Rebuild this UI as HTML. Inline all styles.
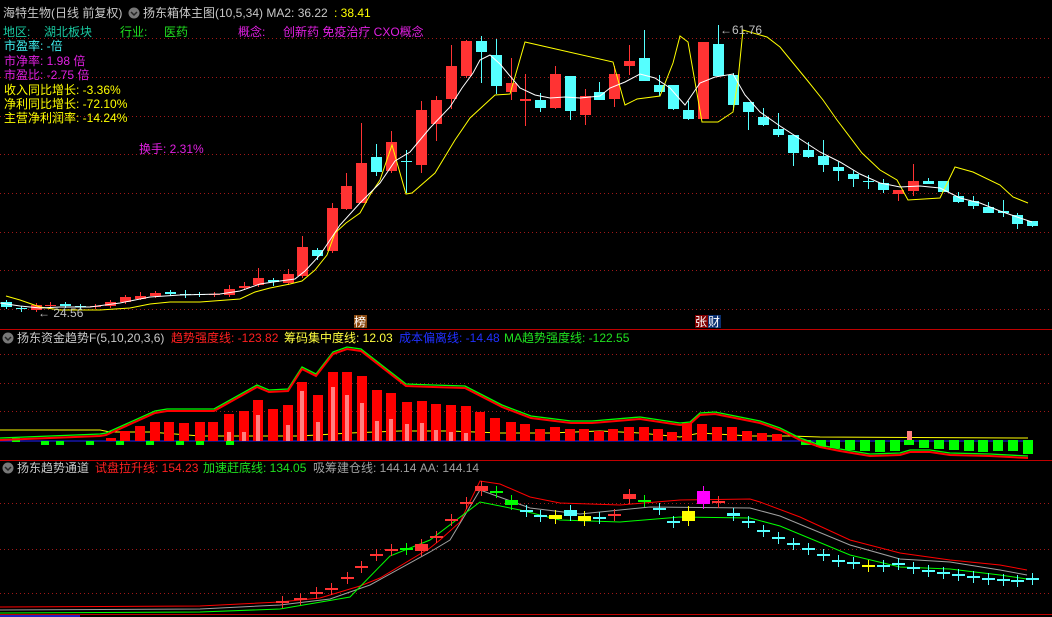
<!DOCTYPE html>
<html><head><meta charset="utf-8"><style>
html,body{margin:0;padding:0;background:#000;width:1052px;height:617px;overflow:hidden}
svg{display:block}
text{font-family:"Liberation Sans","Noto Sans CJK SC","WenQuanYi Zen Hei",sans-serif;font-size:12px}
</style></head><body>
<svg id="s" width="1052" height="617" viewBox="0 0 1052 617" xmlns="http://www.w3.org/2000/svg">
<rect width="1052" height="617" fill="#000"/>
<g id="grid" stroke="#a01818" stroke-width="1" stroke-dasharray="1,3"></g>
<g id="g"></g>
<line x1="0" y1="329.5" x2="1052" y2="329.5" stroke="#c00000"/>
<line x1="0" y1="460.5" x2="1052" y2="460.5" stroke="#c00000"/>
<line x1="0" y1="614.5" x2="1052" y2="614.5" stroke="#c00000"/>
<line x1="0" y1="616" x2="80" y2="616" stroke="#2020c0" stroke-width="2"/>
<!-- header -->
<text x="3" y="17" fill="#c8c8c8">海特生物(日线 前复权)</text>
<circle cx="134" cy="13" r="5.5" fill="#777"/><path d="M131 12 L134 15 L137 12" stroke="#222" stroke-width="1.5" fill="none"/>
<text x="143" y="17" fill="#c8c8c8">扬东箱体主图(10,5,34)  MA2: 36.22</text>
<text x="334" y="17" fill="#ffff00">: 38.41</text>
<text x="3" y="36" fill="#19c8a0">地区:</text>
<text x="44" y="36" fill="#19c8a0">湖北板块</text>
<text x="120" y="36" fill="#20e020">行业:</text>
<text x="164" y="36" fill="#20e020">医药</text>
<text x="238" y="36" fill="#e020e0">概念:</text>
<text x="283" y="36" fill="#e020e0">创新药 免疫治疗 CXO概念</text>
<text x="4" y="50" fill="#40f0f0">市盈率: -倍</text>
<text x="4" y="65" fill="#e020e0">市净率: 1.98 倍</text>
<text x="4" y="79" fill="#e020e0">市盈比: -2.75 倍</text>
<text x="4" y="94" fill="#ffff00">收入同比增长: -3.36%</text>
<text x="4" y="108" fill="#ffff00">净利同比增长: -72.10%</text>
<text x="4" y="122" fill="#ffff00">主营净利润率: -14.24%</text>
<text x="139" y="153" fill="#e020e0">换手: 2.31%</text>
<text x="720" y="34" fill="#c0c0c0">←61.76</text>
<text x="38" y="317" fill="#c0c0c0">← 24.56</text>
<rect x="354" y="315" width="13" height="13" fill="#8a4a10"/><text x="354" y="326" fill="#fff" font-size="11">榜</text>
<rect x="695" y="315" width="13" height="13" fill="#800000"/><text x="695" y="326" fill="#fff" font-size="11">张</text>
<rect x="708" y="315" width="13" height="13" fill="#0a3070"/><text x="708" y="326" fill="#fff" font-size="11">财</text>
<!-- panel 2 header -->
<circle cx="8" cy="338" r="5.5" fill="#777"/><path d="M5 337 L8 340 L11 337" stroke="#222" stroke-width="1.5" fill="none"/>
<text x="17" y="342" fill="#c8c8c8">扬东资金趋势F(5,10,20,3,6)</text>
<text x="171" y="342" fill="#ff2020">趋势强度线: -123.82</text>
<text x="284" y="342" fill="#ffff40">筹码集中度线: 12.03</text>
<text x="399" y="342" fill="#2030ff">成本偏离线: -14.48</text>
<text x="504" y="342" fill="#20e020">MA趋势强度线: -122.55</text>
<!-- panel 3 header -->
<circle cx="8" cy="468" r="5.5" fill="#777"/><path d="M5 467 L8 470 L11 467" stroke="#222" stroke-width="1.5" fill="none"/>
<text x="17" y="472" fill="#c8c8c8">扬东趋势通道</text>
<text x="95" y="472" fill="#ff2020">试盘拉升线: 154.23</text>
<text x="203" y="472" fill="#20e020">加速赶底线: 134.05</text>
<text x="313" y="472" fill="#a0a0a0">吸筹建仓线: 144.14  AA: 144.14</text>
</svg>
<script>
var NS="http://www.w3.org/2000/svg",g=document.getElementById('g'),gr=document.getElementById('grid');
function el(t,a,p){var e=document.createElementNS(NS,t);for(var k in a)e.setAttribute(k,a[k]);(p||g).appendChild(e);return e;}
[38,77,116,154,193,232,270,309,354,383,411,503,549,593].forEach(function(y){el('line',{x1:0,y1:y+.5,x2:1052,y2:y+.5},gr);});
function pl(pts,c,w){el('polyline',{points:pts.map(function(p){return p.join(',')}).join(' '),fill:'none',stroke:c,'stroke-width':w||1});}
var R='#ff3333',C='#55ffff';
// main candles [x,top,bot,color,wt,wb]
var cs=[[6,302,307,C,300,309],[21,308,309,C,306,312],[36,305,310,R],[50,305,306,R,302,308],[65,304,306,C],[80,306,307,C,304,310],[95,306,307,R,304,309],[110,302,306,R],[125,297,302,R],[140,296,299,R,292,300],[155,293,296,R],[170,292,294,C,290,296],[185,294,295,C,290,298],[199,294,295,C],[214,294,295,R,292,297],[229,289,295,R,285,297],[244,286,288,R,282,290],[258,278,285,R,268,287],[273,280,282,C,278,286],[288,274,283,R,269,285],[302,247,276,R,236,278],[317,250,256,C,248,260],[332,208,251,R,203,253],[346,186,209,R,173,210],[361,163,203,R,123,203],[376,157,172,C,144,176],[391,142,171,R,131,173],[406,161,162,C,150,193],[421,110,165,R,101,173],[436,100,124,R,96,141],[451,66,99,R,45,109],[466,41,76,R,40,78],[481,41,52,C,36,83],[496,55,86,C,39,94],[511,83,92,R,58,100],[525,99,101,R,74,126],[540,100,108,C,93,112],[555,74,108,R,66,109],[570,76,111,C,76,120],[585,96,115,R,89,125],[599,92,100,C,82,100],[614,74,99,R,66,107],[629,61,66,R,45,75],[644,58,81,C,30,81],[659,85,92,C,75,96],[673,85,109,C,85,110],[688,110,119,C,101,120],[703,42,119,R,42,119],[718,44,76,C,25,76],[733,75,105,C,73,110],[748,102,112,C,102,130],[763,117,125,C,108,126],[778,129,135,C,113,137],[793,135,153,C,135,166],[808,150,157,C,142,158],[823,156,165,C,140,172],[838,167,171,C,162,181],[853,174,179,C,170,187],[868,181,182,C,175,189],[883,183,190,C,179,193],[898,190,194,R,190,201],[913,181,191,R,164,196],[928,181,184,C,178,184],[943,181,192,C,181,192],[958,196,202,C,192,203],[973,201,206,C,196,209],[988,207,213,C,202,213],[1003,211,213,C,200,217],[1017,215,224,C,213,229],[1032,221,226,C,221,227]];
cs.forEach(function(c){var x=c[0],t=c[1],b=c[2],wt=c[4]||t-2,wb=c[5]||b+2;
el('line',{x1:x+.5,y1:wt,x2:x+.5,y2:wb,stroke:c[3]});
el('rect',{x:x-5,y:t,width:11,height:Math.max(1,b-t),fill:c[3]});});
pl([[6,296],[20,300],[40,307],[60,310],[100,310],[130,308],[150,304],[170,302],[200,302],[240,299],[255,292],[270,288],[290,284],[302,281],[315,270],[327,255],[335,233],[346,223],[360,213],[370,195],[380,180],[392,145],[406,194],[412,193],[435,173],[455,140],[470,118],[495,95],[510,94],[525,42],[613,62],[625,105],[637,99],[660,96],[673,63],[680,36],[688,42],[702,122],[718,122],[733,112],[738,80],[743,30],[767,37],[780,47],[807,80],[823,100],[837,120],[862,153],[880,170],[897,180],[908,200],[940,198],[955,167],[973,172],[1000,185],[1013,197],[1028,203]],'#ffff00');
pl([[0,303],[20,306],[40,308],[60,307],[90,307],[120,303],[150,297],[180,295],[220,294],[240,291],[260,284],[280,281],[295,279],[305,271],[320,255],[340,225],[360,203],[380,183],[395,161],[410,152],[430,128],[450,107],[462,88],[473,73],[480,60],[490,55],[500,64],[520,88],[535,95],[550,98],[565,97],[580,98],[600,96],[610,88],[625,82],[640,74],[655,78],[670,88],[685,105],[700,83],[715,77],[733,74],[745,95],[760,112],[780,126],[800,139],[820,152],[840,162],[860,174],[880,183],[900,187],[920,186],[940,188],[960,198],[980,203],[1000,211],[1020,218],[1032,222]],'#ffffff');
// panel2
pl([[0,430],[100,430],[110,432],[150,432],[200,436],[300,436],[350,433],[400,431],[450,431],[500,433],[550,433],[600,431],[640,433],[680,437],[700,433],[750,436],[790,436],[820,437],[1028,438]],'#ffff00');
pl([[0,441],[1028,441]],'#2020ff');
var bars=[[111,438],[125,431],[140,426],[155,422],[169,422],[184,423],[200,422],[213,422],[229,414],[244,411],[258,400],[273,409],[288,405],[302,382],[318,395],[333,372],[347,372],[362,376],[377,390],[391,393],[407,402],[422,401],[436,404],[451,405],[466,406],[480,412],[495,418],[511,422],[525,424],[540,429],[555,427],[570,429],[584,429],[599,431],[613,429],[629,427],[644,427],[658,429],[672,432],[687,423],[702,424],[717,427],[732,427],[747,431],[762,433],[777,434]];
bars.forEach(function(b){el('rect',{x:b[0]-5,y:b[1],width:10,height:441-b[1],fill:'#ff0000'});});
[[229,432],[244,432],[258,415],[288,425],[302,391],[318,422],[333,387],[347,395],[362,403],[377,421],[391,419],[407,424],[422,423],[436,430],[451,432],[466,433]].forEach(function(p){el('rect',{x:p[0]-2,y:p[1],width:4,height:441-p[1],fill:'#ff8080'});});
[[806,445],[821,447],[835,448],[850,450],[865,451],[880,452],[895,451],[909,445],[924,448],[939,449],[954,450],[969,451],[983,452],[998,451],[1013,451],[1028,454]].forEach(function(b){el('rect',{x:b[0]-5,y:440,width:10,height:b[1]-440,fill:'#00ff00'});});
el('rect',{x:907,y:431,width:5,height:9,fill:'#ff8080'});
[[16,438],[45,441],[60,441],[90,441],[120,441],[150,441],[180,441],[200,441],[230,441]].forEach(function(b){el('rect',{x:b[0]-4,y:b[1],width:8,height:4,fill:'#00ff00'});});
var red2=[[0,440],[100,436],[106,435],[155,413],[167,411],[214,411],[257,387],[269,392],[288,391],[302,369],[316,376],[333,354],[347,349],[361,351],[406,386],[433,387],[465,388],[502,407],[531,418],[571,423],[592,423],[640,419],[680,425],[690,424],[700,415],[715,414],[730,417],[760,423],[780,430],[800,440],[820,447],[840,451],[870,456],[900,455],[910,452],[930,452],[950,455],[990,456],[1028,458]];
pl(red2.map(function(p){return [p[0],p[1]-2]}),'#00ff00',1.3);
pl(red2,'#ff0000',2);
// panel3
function sh(pts,d){return pts.map(function(p){return [p[0],p[1]+d]});}
pl([[0,607],[200,606],[280,602],[320,598],[360,586],[380,578],[430,548],[440,540],[460,522],[480,481],[500,484],[530,497],[560,503],[620,505],[680,500],[750,499],[760,502],[800,517],[850,540],[900,553],[950,560],[1000,565],[1027,570]],'#ff0000');
pl([[0,610],[200,609],[280,605],[330,599],[370,585],[430,552],[450,540],[480,490],[530,508],[580,514],[650,507],[750,508],[780,516],[850,545],[900,559],[950,562],[1000,570],[1027,575]],'#a0a0a0');
pl([[0,613],[200,612],[280,609],[350,597],[390,556],[430,540],[480,502],[520,510],[560,520],[620,522],[680,517],[750,518],[780,526],[850,555],[900,567],[950,569],[1000,575],[1027,579]],'#00ff00');
var k3=[[282,601,R],[300,598,R],[316,592,R],[331,588,R],[347,577,R],[361,566,R],[376,554,R],[391,549,R],[406,548,'#00ff00'],[421,544,R,7],[436,536,R],[451,519,R],[466,502,R],[481,486,R,5],[496,491,'#00ff00'],[511,500,'#00ff00',5],[526,510,C],[540,515,C],[555,515,'#ffff00',4],[570,510,C,6],[584,516,'#ffff00',5],[599,517,C],[614,514,R],[629,494,R,5],[644,500,'#00ff00'],[659,508,C],[673,521,C],[688,511,'#ffff00',10],[703,491,'#ff00ff',13],[718,501,R],[733,513,C,3],[748,521,C],[763,530,C],[778,537,C],[793,543,C],[808,548,C],[823,554,C],[838,560,C],[853,562,C],[868,565,'#ffff00'],[883,565,C],[898,563,C],[913,567,C],[928,570,C],[943,572,C],[958,574,C],[973,576,C],[988,578,C],[1003,579,C],[1017,580,C],[1032,578,C]];
k3.forEach(function(c){var h=c[3]||2;el('line',{x1:c[0]+.5,y1:c[1]-5,x2:c[0]+.5,y2:c[1]+h+5,stroke:c[2]});el('rect',{x:c[0]-6,y:c[1],width:13,height:h,fill:c[2]});});
</script>
</body></html>
